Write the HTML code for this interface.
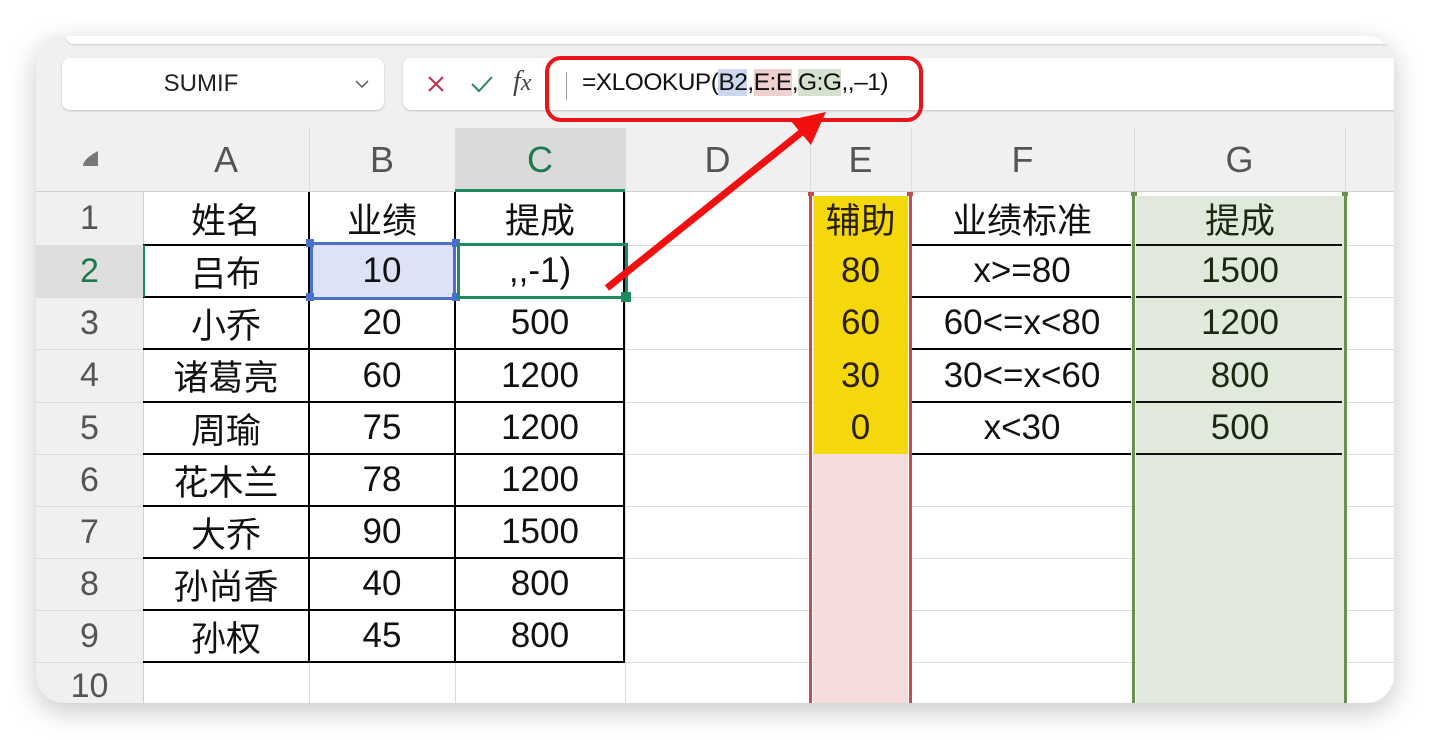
<!DOCTYPE html><html><head><meta charset="utf-8"><style>
*{margin:0;padding:0;box-sizing:border-box}
body{width:1430px;height:740px;background:#fff;position:relative;overflow:hidden;font-family:"Liberation Sans","Noto Sans CJK SC",sans-serif}
.card{position:absolute;left:36px;top:36px;width:1358px;height:667px;border-radius:28px;background:#f0f0f0;box-shadow:0 8px 28px rgba(0,0,0,.22);overflow:hidden}
.a{position:absolute}
.t{position:absolute;display:flex;align-items:center;justify-content:center;font-size:35px;color:#111;font-family:"Liberation Sans","Noto Sans CJK SC",sans-serif}
.h{color:#555;font-size:36px}
.rh{color:#555;font-size:34px}
.vl{position:absolute;width:1px;background:#dcdcdc}
.hl{position:absolute;height:1px;background:#dcdcdc}
</style></head><body>
<div class="card">
 <div class="a" style="left:30px;top:0;width:1330px;height:8px;background:#fff;border-radius:0 0 8px 8px;box-shadow:0 1px 2px rgba(0,0,0,.15)"></div>
 <div class="a" style="left:26px;top:22px;width:322px;height:52px;background:#fff;border-radius:8px;box-shadow:0 1px 2px rgba(0,0,0,.2)"></div>
 <div class="t" style="left:90px;top:22px;width:150px;height:52px;font-size:24px;color:#222">SUMIF</div>
 <svg class="a" style="left:318px;top:42px" width="16" height="12"><path d="M2 3 L8 9 L14 3" fill="none" stroke="#555" stroke-width="1.5"/></svg>
 <div class="a" style="left:367px;top:22px;width:1000px;height:52px;background:#fff;border-radius:8px 0 0 8px;box-shadow:0 1px 2px rgba(0,0,0,.2)"></div>
 <svg class="a" style="left:390px;top:38px" width="20" height="20"><path d="M3 3 L17 17 M17 3 L3 17" stroke="#c0304a" stroke-width="2"/></svg>
 <svg class="a" style="left:434px;top:38px" width="24" height="20"><path d="M2 10 L9 17 L22 3" fill="none" stroke="#2a8a5a" stroke-width="2"/></svg>
 <div class="a" style="left:477px;top:30px;font-family:'Liberation Serif',serif;font-style:italic;font-size:28px;color:#444">f<span style="font-size:24px">x</span></div>
 <div class="a" style="left:530px;top:36px;width:1px;height:28px;background:#999"></div>
 <div class="a" style="left:546px;top:33px;font-size:24.5px;color:#111;white-space:pre;letter-spacing:-0.5px">=XLOOKUP(<span style="background:#ccd6ef">B2</span>,<span style="background:#f0cfcf">E:E</span>,<span style="background:#d5e0cf">G:G</span>,,–1)</div>
 <div class="a" style="left:107px;top:156px;width:1251px;height:520px;background:#fff"></div>
 <div class="a" style="left:0;top:209px;width:107px;height:52px;background:#dedede"></div>
 <div class="a" style="left:419px;top:92px;width:170px;height:64px;background:#dadada"></div>
 <svg class="a" style="left:44px;top:112px" width="22" height="22"><path d="M18 3 L18 18 L3 18 Q3 11 18 3Z" fill="#777"/></svg>
 <div class="t h" style="left:107px;top:92px;width:166px;height:64px">A</div>
 <div class="t h" style="left:273px;top:92px;width:146px;height:64px">B</div>
 <div class="t h" style="left:419px;top:92px;width:170px;height:64px;color:#1e7a4e">C</div>
 <div class="t h" style="left:589px;top:92px;width:185px;height:64px">D</div>
 <div class="t h" style="left:774px;top:92px;width:101px;height:64px">E</div>
 <div class="t h" style="left:875px;top:92px;width:223px;height:64px">F</div>
 <div class="t h" style="left:1098px;top:92px;width:211px;height:64px">G</div>
 <div class="vl" style="left:273px;top:92px;height:64px"></div><div class="vl" style="left:419px;top:92px;height:64px"></div><div class="vl" style="left:589px;top:92px;height:64px"></div><div class="vl" style="left:774px;top:92px;height:64px"></div><div class="vl" style="left:875px;top:92px;height:64px"></div><div class="vl" style="left:1098px;top:92px;height:64px"></div><div class="vl" style="left:1309px;top:92px;height:64px"></div>
 <div class="hl" style="left:0;top:155px;width:1358px;background:#d0d0d0"></div>
 <div class="vl" style="left:107px;top:156px;height:520px;background:#d0d0d0"></div>
 <div class="vl" style="left:273px;top:156px;height:520px"></div><div class="vl" style="left:419px;top:156px;height:520px"></div><div class="vl" style="left:589px;top:156px;height:520px"></div><div class="vl" style="left:1098px;top:156px;height:520px"></div><div class="vl" style="left:1309px;top:156px;height:520px"></div>
 <div class="hl" style="left:0;top:209px;width:1358px"></div><div class="hl" style="left:0;top:261px;width:1358px"></div><div class="hl" style="left:0;top:313px;width:1358px"></div><div class="hl" style="left:0;top:366px;width:1358px"></div><div class="hl" style="left:0;top:418px;width:1358px"></div><div class="hl" style="left:0;top:470px;width:1358px"></div><div class="hl" style="left:0;top:522px;width:1358px"></div><div class="hl" style="left:0;top:574px;width:1358px"></div><div class="hl" style="left:0;top:626px;width:1358px"></div>
 <div class="t rh" style="left:0;top:156px;width:107px;height:53px">1</div>
 <div class="t rh" style="left:0;top:209px;width:107px;height:52px;color:#1e7a4e">2</div>
 <div class="t rh" style="left:0;top:261px;width:107px;height:52px">3</div>
 <div class="t rh" style="left:0;top:313px;width:107px;height:53px">4</div>
 <div class="t rh" style="left:0;top:366px;width:107px;height:52px">5</div>
 <div class="t rh" style="left:0;top:418px;width:107px;height:52px">6</div>
 <div class="t rh" style="left:0;top:470px;width:107px;height:52px">7</div>
 <div class="t rh" style="left:0;top:522px;width:107px;height:52px">8</div>
 <div class="t rh" style="left:0;top:574px;width:107px;height:52px">9</div>
 <div class="t rh" style="left:0;top:626px;width:107px;height:48px">10</div>
 <div class="a" style="left:107px;top:156px;width:482px;height:470px;border-right:2px solid #000"></div>
 <div class="a" style="left:272px;top:156px;width:2px;height:470px;background:#000"></div>
 <div class="a" style="left:418px;top:156px;width:2px;height:470px;background:#000"></div>
 <div class="a" style="left:107px;top:208px;width:482px;height:2px;background:#000"></div><div class="a" style="left:107px;top:260px;width:482px;height:2px;background:#000"></div><div class="a" style="left:107px;top:312px;width:482px;height:2px;background:#000"></div><div class="a" style="left:107px;top:365px;width:482px;height:2px;background:#000"></div><div class="a" style="left:107px;top:417px;width:482px;height:2px;background:#000"></div><div class="a" style="left:107px;top:469px;width:482px;height:2px;background:#000"></div><div class="a" style="left:107px;top:521px;width:482px;height:2px;background:#000"></div><div class="a" style="left:107px;top:573px;width:482px;height:2px;background:#000"></div><div class="a" style="left:107px;top:625px;width:482px;height:2px;background:#000"></div>
 <div class="a" style="left:274px;top:209px;width:145px;height:52px;background:#dde3f5"></div>
 <div class="a" style="left:107px;top:209px;width:2px;height:52px;background:#1e8a5e"></div>
 <div class="a" style="left:274px;top:206px;width:146px;height:58px;border:3px solid #4a72cc"></div>
 <div class="a" style="left:270px;top:203px;width:8px;height:8px;background:#4a72cc"></div><div class="a" style="left:416px;top:203px;width:8px;height:8px;background:#4a72cc"></div><div class="a" style="left:270px;top:257px;width:8px;height:8px;background:#4a72cc"></div><div class="a" style="left:416px;top:257px;width:8px;height:8px;background:#4a72cc"></div>
 <div class="a" style="left:421px;top:207px;width:171px;height:56px;border:3px solid #1e8a5e"></div>
 <div class="a" style="left:419px;top:153px;width:170px;height:3px;background:#1e8a5e"></div>
 <div class="a" style="left:585px;top:256px;width:10px;height:10px;background:#1e8a5e"></div>
 <div class="t" style="left:107px;top:156px;width:166px;height:53px">姓名</div><div class="t" style="left:273px;top:156px;width:146px;height:53px">业绩</div><div class="t" style="left:419px;top:156px;width:170px;height:53px">提成</div>
 <div class="t" style="left:107px;top:209px;width:166px;height:52px">吕布</div><div class="t" style="left:273px;top:209px;width:146px;height:52px">10</div><div class="t" style="left:419px;top:209px;width:170px;height:52px">,,-1)</div>
 <div class="t" style="left:107px;top:261px;width:166px;height:52px">小乔</div><div class="t" style="left:273px;top:261px;width:146px;height:52px">20</div><div class="t" style="left:419px;top:261px;width:170px;height:52px">500</div>
 <div class="t" style="left:107px;top:313px;width:166px;height:53px">诸葛亮</div><div class="t" style="left:273px;top:313px;width:146px;height:53px">60</div><div class="t" style="left:419px;top:313px;width:170px;height:53px">1200</div>
 <div class="t" style="left:107px;top:366px;width:166px;height:52px">周瑜</div><div class="t" style="left:273px;top:366px;width:146px;height:52px">75</div><div class="t" style="left:419px;top:366px;width:170px;height:52px">1200</div>
 <div class="t" style="left:107px;top:418px;width:166px;height:52px">花木兰</div><div class="t" style="left:273px;top:418px;width:146px;height:52px">78</div><div class="t" style="left:419px;top:418px;width:170px;height:52px">1200</div>
 <div class="t" style="left:107px;top:470px;width:166px;height:52px">大乔</div><div class="t" style="left:273px;top:470px;width:146px;height:52px">90</div><div class="t" style="left:419px;top:470px;width:170px;height:52px">1500</div>
 <div class="t" style="left:107px;top:522px;width:166px;height:52px">孙尚香</div><div class="t" style="left:273px;top:522px;width:146px;height:52px">40</div><div class="t" style="left:419px;top:522px;width:170px;height:52px">800</div>
 <div class="t" style="left:107px;top:574px;width:166px;height:52px">孙权</div><div class="t" style="left:273px;top:574px;width:146px;height:52px">45</div><div class="t" style="left:419px;top:574px;width:170px;height:52px">800</div>
 <div class="a" style="left:777px;top:160px;width:95px;height:520px;background:#f5dcdc"></div>
 <div class="a" style="left:778px;top:160px;width:94px;height:258px;background:#f4d80c"></div>
 <div class="a" style="left:773px;top:160px;width:3px;height:520px;background:#c0504d"></div>
 <div class="a" style="left:873px;top:160px;width:3px;height:520px;background:#c0504d"></div>
 <div class="a" style="left:772px;top:156px;width:6px;height:4px;background:#c0504d"></div><div class="a" style="left:871px;top:156px;width:6px;height:4px;background:#c0504d"></div>
 <div class="t" style="left:776px;top:156px;width:97px;height:53px;color:#2a2000">辅助</div>
 <div class="t" style="left:776px;top:209px;width:97px;height:52px;color:#2a2000">80</div>
 <div class="t" style="left:776px;top:261px;width:97px;height:52px;color:#2a2000">60</div>
 <div class="t" style="left:776px;top:313px;width:97px;height:53px;color:#2a2000">30</div>
 <div class="t" style="left:776px;top:366px;width:97px;height:52px;color:#2a2000">0</div>
 <div class="a" style="left:1100px;top:160px;width:208px;height:520px;background:#e1e8dc"></div>
 <div class="a" style="left:1096px;top:160px;width:3px;height:520px;background:#6a8f4e"></div>
 <div class="a" style="left:1308px;top:160px;width:3px;height:520px;background:#6a8f4e"></div>
 <div class="a" style="left:1095px;top:156px;width:6px;height:4px;background:#6a8f4e"></div><div class="a" style="left:1306px;top:156px;width:6px;height:4px;background:#6a8f4e"></div>
 <div class="a" style="left:876px;top:208px;width:219px;height:2px;background:#000"></div><div class="a" style="left:876px;top:260px;width:219px;height:2px;background:#000"></div><div class="a" style="left:876px;top:312px;width:219px;height:2px;background:#000"></div><div class="a" style="left:876px;top:365px;width:219px;height:2px;background:#000"></div><div class="a" style="left:876px;top:417px;width:219px;height:2px;background:#000"></div>
 <div class="a" style="left:1100px;top:208px;width:206px;height:2px;background:#111"></div><div class="a" style="left:1100px;top:260px;width:206px;height:2px;background:#111"></div><div class="a" style="left:1100px;top:312px;width:206px;height:2px;background:#111"></div><div class="a" style="left:1100px;top:365px;width:206px;height:2px;background:#111"></div><div class="a" style="left:1100px;top:417px;width:206px;height:2px;background:#111"></div>
 <div class="t" style="left:876px;top:156px;width:220px;height:53px">业绩标准</div>
 <div class="t" style="left:876px;top:209px;width:220px;height:52px">x&gt;=80</div>
 <div class="t" style="left:876px;top:261px;width:220px;height:52px">60&lt;=x&lt;80</div>
 <div class="t" style="left:876px;top:313px;width:220px;height:53px">30&lt;=x&lt;60</div>
 <div class="t" style="left:876px;top:366px;width:220px;height:52px">x&lt;30</div>
 <div class="t" style="left:1100px;top:156px;width:208px;height:53px;color:#1a2a10">提成</div>
 <div class="t" style="left:1100px;top:209px;width:208px;height:52px;color:#1a2a10">1500</div>
 <div class="t" style="left:1100px;top:261px;width:208px;height:52px;color:#1a2a10">1200</div>
 <div class="t" style="left:1100px;top:313px;width:208px;height:53px;color:#1a2a10">800</div>
 <div class="t" style="left:1100px;top:366px;width:208px;height:52px;color:#1a2a10">500</div>
</div>
<svg class="a" style="left:0;top:0" width="1430" height="740">
 <rect x="547" y="58" width="374" height="62" rx="14" fill="none" stroke="#e8141a" stroke-width="4"/>
 <line x1="607" y1="288" x2="803" y2="131" stroke="#f01010" stroke-width="7"/>
 <polygon points="826,112 790,120 811,145" fill="#f01010"/>
</svg>
</body></html>
